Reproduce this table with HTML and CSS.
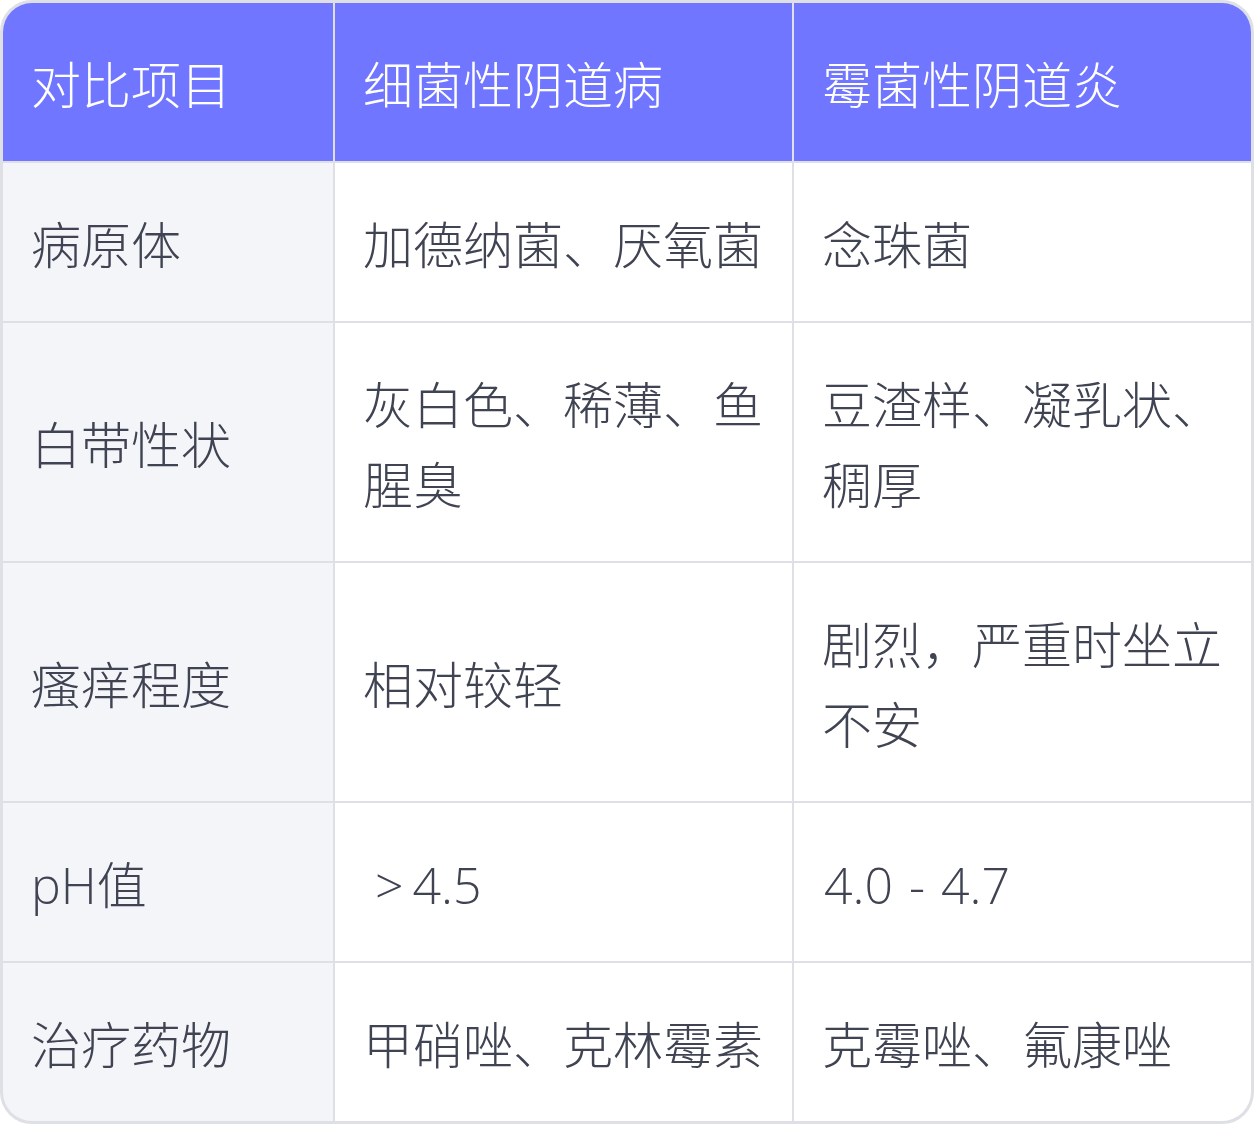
FILE: index.html
```html
<!DOCTYPE html>
<html lang="zh-CN">
<head>
<meta charset="utf-8">
<title>细菌性阴道病与霉菌性阴道炎对比</title>
<link rel="stylesheet" href="styles.css">
</head>
<body>
<div class="table">
  <div class="cell head">对比项目</div>
  <div class="cell head">细菌性阴道病</div>
  <div class="cell head">霉菌性阴道炎</div>

  <div class="cell label">病原体</div>
  <div class="cell">加德纳菌、厌氧菌</div>
  <div class="cell">念珠菌</div>

  <div class="cell label">白带性状</div>
  <div class="cell">灰白色、稀薄、鱼腥臭</div>
  <div class="cell">豆渣样、凝乳状、稠厚</div>

  <div class="cell label">瘙痒程度</div>
  <div class="cell">相对较轻</div>
  <div class="cell">剧烈，严重时坐立不安</div>

  <div class="cell label">pH值</div>
  <div class="cell"><span class="gt">&gt;</span>4.5</div>
  <div class="cell"><span class="range">4.0 - 4.7</span></div>

  <div class="cell label">治疗药物</div>
  <div class="cell">甲硝唑、克林霉素</div>
  <div class="cell">克霉唑、氟康唑</div>
</div>
</body>
</html>
```
FILE: styles.css
```css
html, body {
  margin: 0;
  padding: 0;
  background: #ffffff;
}
.table {
  width: 1254px;
  box-sizing: border-box;
  border: 3px solid #dfe0e6;
  border-radius: 32px;
  overflow: hidden;
  background: #dfe0e6;
  display: grid;
  grid-template-columns: 330px 457px 457px;
  grid-template-rows: 158px 158px 238px 238px 158px 158px;
  gap: 2px;
  font-family: "Open Sans", "Noto Sans CJK SC", sans-serif;
  font-weight: 300;
  font-size: 50px;
  line-height: 80px;
  color: #3f4352;
}
.cell {
  background: #ffffff;
  padding: 5px 20px 0 28px;
  display: flex;
  align-items: center;
}
.head {
  background: #7076ff;
  color: #ffffff;
}
.label {
  background: #f4f5f9;
}
.gt {
  margin: 0 9px 0 12px;
}
.range {
  margin-left: 2px;
  word-spacing: 3px;
}
```
